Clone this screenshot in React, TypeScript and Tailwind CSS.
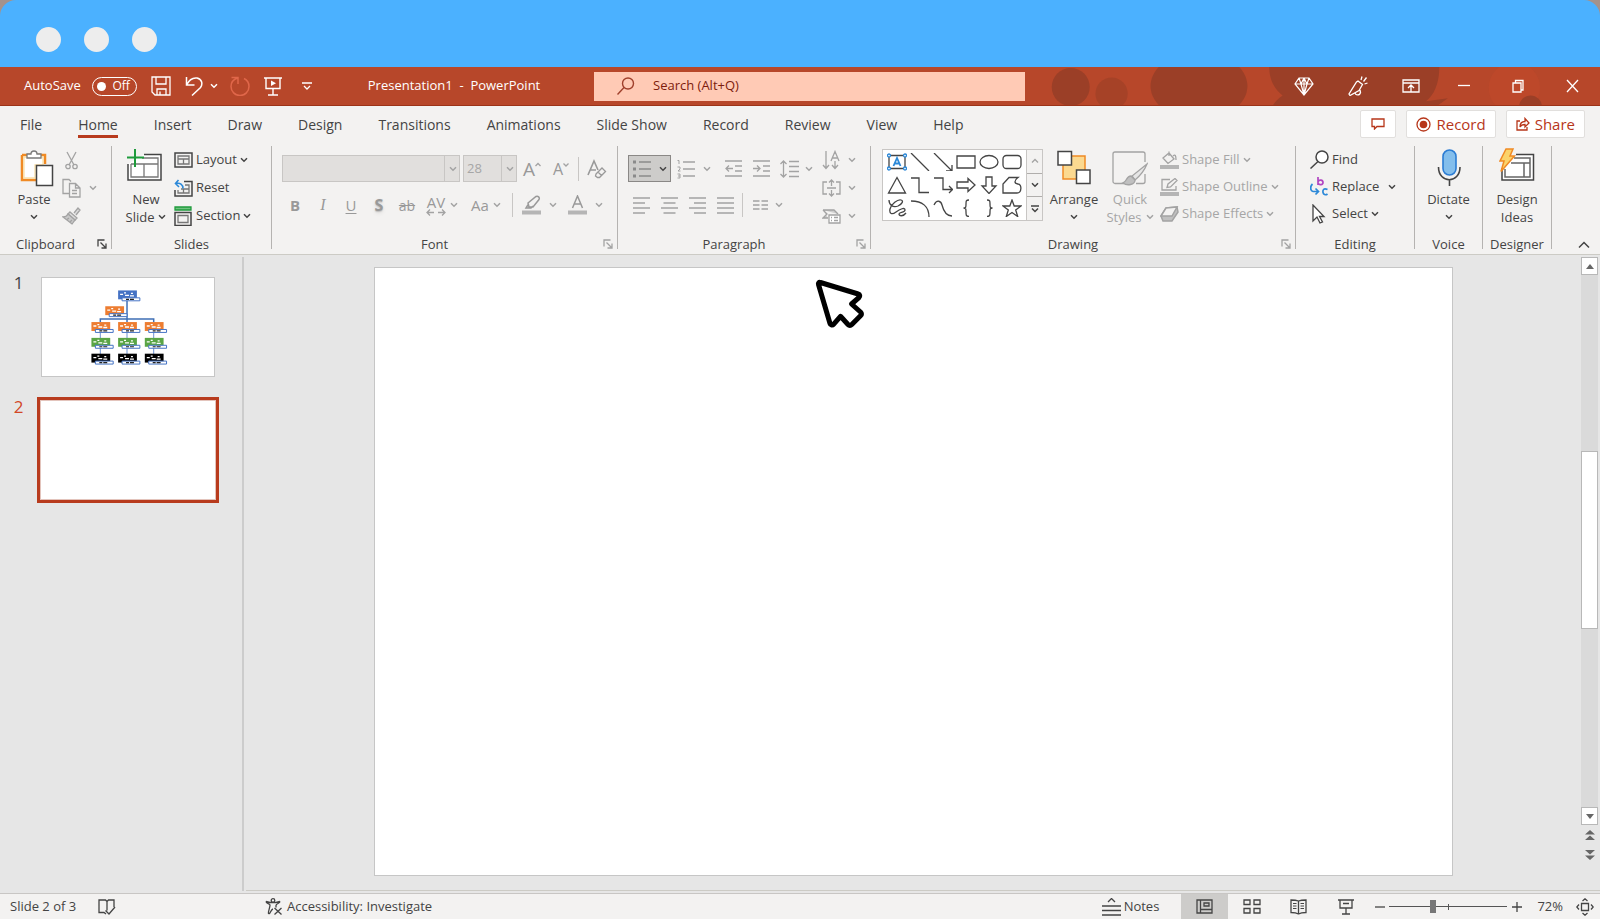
// src/App.tsx
import type { ReactNode } from 'react';
import clsx from 'clsx';

const INK = '#444444';
const MUTED = '#a3a3a3';

type IconProps = { w: number; h: number; color?: string; sw?: number; className?: string; children: ReactNode };

function Icon({ w, h, color = INK, sw = 1.3, className, children }: IconProps) {
  return (
    <svg
      width={w}
      height={h}
      viewBox={`0 0 ${w} ${h}`}
      fill="none"
      stroke={color}
      strokeWidth={sw}
      className={clsx('shrink-0', className)}
      aria-hidden="true"
    >
      {children}
    </svg>
  );
}

function Chevron({ color = INK }: { color?: string }) {
  return (
    <Icon w={8} h={6} color={color} sw={1.5}>
      <path d="M1 1.2l3 3 3-3" />
    </Icon>
  );
}

/* ---------- window + title bar ---------- */

function WindowBar() {
  return (
    <div className="bg-[#a3928c]">
      <div className="flex h-[67px] items-center gap-[23px] rounded-t-2xl bg-[#4bb1ff] pt-3 pl-9">
        <span className="size-[25px] rounded-full bg-[#ededed]" />
        <span className="size-[25px] rounded-full bg-[#ededed]" />
        <span className="size-[25px] rounded-full bg-[#ededed]" />
      </div>
    </div>
  );
}

function TitleBackdrop() {
  return (
    <svg className="absolute top-0 right-0 h-full" width="575" height="40" viewBox="0 0 575 40" aria-hidden="true">
      <g fill="#9b3f27">
        <circle cx="33" cy="21" r="20" />
        <circle cx="76" cy="28" r="17" opacity="0.6" />
        <ellipse cx="168" cy="20" rx="51" ry="36" />
        <path d="M242 0h179c0 18-6 30-14 36l23-3-10 7H246c4-6 10-10 10-10-10-8-14-18-14-30z" />
      </g>
      <circle cx="500" cy="22" r="27" fill="#c24a2b" opacity="0.6" />
      <circle cx="517" cy="42" r="12" fill="#9b3f27" />
    </svg>
  );
}

function TitleBar() {
  return (
    <header className="relative flex h-[39px] items-center border-b border-[#9c3318] bg-[#b7472a] text-white">
      <TitleBackdrop />
      <div className="relative flex w-[594px] shrink-0 items-center pl-6">
        <label className="flex items-center gap-[11px] text-[13px]">
          AutoSave
          <span className="relative flex h-[19px] w-[45px] items-center justify-end pr-[7px]">
            <input
              type="checkbox"
              role="switch"
              className="absolute inset-0 appearance-none rounded-full border-[1.5px] border-white"
            />
            <span className="absolute left-[5px] size-[9px] rounded-full bg-white" />
            <span className="text-[12px]">Off</span>
          </span>
        </label>
        <button type="button" aria-label="Save" className="ml-[14px]">
          <Icon w={20} h={20} color="#fff">
            <path d="M1 1h18v18H4l-3-3zM5 1v7h10V1M6 19v-6h9v6M9 15.500v3.500" />
          </Icon>
        </button>
        <button type="button" aria-label="Undo" className="ml-[14px]">
          <Icon w={18} h={20} color="#fff" sw={1.5}>
            <path d="M1.500 1v8h8M1.500 9C4 4 8 1.500 12 2c5 1 6 6 3.500 9.500L7 19.500" />
          </Icon>
        </button>
        <button type="button" aria-label="Undo history" className="ml-[7px]">
          <Chevron color="#fff" />
        </button>
        <button type="button" aria-label="Redo" className="ml-3">
          <Icon w={20} h={20} color="#e0674a" sw={1.5}>
            <path d="M1.500 1.500H8v6.500M7.500 2C3 3.500 1 7 1 10.500a9 9 0 0 0 18 0C19 7 17 4 14 2.500" />
          </Icon>
        </button>
        <button type="button" aria-label="Start from beginning" className="ml-[14px]">
          <Icon w={18} h={19} color="#fff" sw={1.4}>
            <path d="M0 1h18M2 1v10.500h14V1M9 12v6M4 18h10" />
            <path d="M7 3.500l5 2.800-5 2.800z" fill="#fff" stroke="none" />
          </Icon>
        </button>
        <button type="button" aria-label="Customize toolbar" className="ml-5">
          <Icon w={10} h={8} color="#fff">
            <path d="M0 1h10M2 4l3 3 3-3" />
          </Icon>
        </button>
        <h1 className="ml-14 text-[13px] whitespace-pre">Presentation1&nbsp; -&nbsp; PowerPoint</h1>
      </div>

      <label className="relative flex h-[29px] flex-1 items-center gap-[18px] bg-[#ffcab5] pl-[23px]">
        <Icon w={18} h={18} color="#a0402c" sw={1.4}>
          <circle cx="11" cy="6.500" r="5.500" />
          <path d="M7 10.500L.5 17.500" />
        </Icon>
        <input
          type="search"
          aria-label="Search"
          placeholder="Search (Alt+Q)"
          className="w-full bg-transparent text-[13px] outline-none placeholder:text-[#7d1c0d]"
        />
      </label>

      <div className="relative flex w-[575px] shrink-0 items-center justify-end pr-[21px]">
        <button type="button" aria-label="Premium">
          <Icon w={20} h={19} color="#fff" sw={1.2}>
            <path d="M5 1h10l4 6-9 11L1 7zM1 7h18M5 1l2 6 3 11M15 1l-2 6-3 11M10 1L7 7M10 1l3 6M10 1v17" />
          </Icon>
        </button>
        <button type="button" aria-label="What's new" className="ml-[34px]">
          <Icon w={20} h={20} color="#fff" sw={1.3}>
            <path d="M10 5l4.500 3.500-3.500 6-9 5L1 18l7.500-12zM7 16.500c.5 3 4.500 3.500 5.500 0l-.5-2.500M13 4l1-3.500M15.500 5.500l3-4M16.500 8l3-1" />
          </Icon>
        </button>
        <button type="button" aria-label="Ribbon display options" className="ml-[34px]">
          <Icon w={18} h={14} color="#fff">
            <path d="M1 1h16v12H1zM1 4h16M9 13V6.500M6 9l3-3 3 3" />
          </Icon>
        </button>
        <button type="button" aria-label="Minimize" className="ml-[38px]">
          <Icon w={12} h={14} color="#fff">
            <path d="M0 6.500h12" />
          </Icon>
        </button>
        <button type="button" aria-label="Restore" className="ml-[42px]">
          <Icon w={12} h={14} color="#fff">
            <path d="M1 4h8v9H1zM3.500 4V1.500h7.500V11H9" />
          </Icon>
        </button>
        <button type="button" aria-label="Close" className="ml-[42px]">
          <Icon w={13} h={14} color="#fff">
            <path d="M1 1l11 12M12 1L1 13" />
          </Icon>
        </button>
      </div>
    </header>
  );
}

/* ---------- tabs ---------- */

const TABS = [
  'File', 'Home', 'Insert', 'Draw', 'Design', 'Transitions',
  'Animations', 'Slide Show', 'Record', 'Review', 'View', 'Help',
];

function TabBar() {
  return (
    <nav className="flex h-9 items-center justify-between bg-[#f3f2f1] pr-[15px] pl-5">
      <div className="flex gap-9 pt-1 text-[14px] text-[#444]">
        {TABS.map((tab) => (
          <button
            key={tab}
            type="button"
            className={clsx(
              'h-6 border-b-3 leading-5',
              tab === 'Home' ? 'border-[#b83b1d]' : 'border-transparent',
            )}
          >
            {tab}
          </button>
        ))}
      </div>
      <div className="flex gap-[10px] text-[15px] text-[#b7361a]">
        <button
          type="button"
          aria-label="Comments"
          className="flex h-7 w-9 items-center justify-center rounded-xs border border-[#e1dfdd] bg-white"
        >
          <Icon w={14} h={12} color="#b7361a">
            <path d="M1 1h12v7.500H6L3.500 11V8.500H1z" />
          </Icon>
        </button>
        <button
          type="button"
          className="flex h-7 items-center gap-[5px] rounded-xs border border-[#e1dfdd] bg-white px-[9px]"
        >
          <Icon w={15} h={15} color="#b7361a">
            <circle cx="7.500" cy="7.500" r="6.500" />
            <circle cx="7.500" cy="7.500" r="3.800" fill="#b7361a" stroke="none" />
          </Icon>
          Record
        </button>
        <button
          type="button"
          className="flex h-7 items-center gap-[5px] rounded-xs border border-[#e1dfdd] bg-white px-[9px]"
        >
          <Icon w={14} h={14} color="#b7361a">
            <path d="M4 4H1v9h10v-3M4 10c0-4 2-5.500 5-5.500V1.500L13 6 9 10V7.500C7 7.500 5 8 4 10z" />
          </Icon>
          Share
        </button>
      </div>
    </nav>
  );
}

/* ---------- ribbon building blocks ---------- */

type GroupProps = { label: string; launcher?: 'on' | 'off'; className?: string; children: ReactNode };

function Group({ label, launcher, className, children }: GroupProps) {
  return (
    <section className={clsx('flex shrink-0 flex-col justify-between border-r border-[#b5b3b1]', className)}>
      <div className="flex">{children}</div>
      <div className="flex h-[10px] items-center">
        <h2 className="flex-1 text-center leading-[10px]">{label}</h2>
        {launcher && (
          <button type="button" aria-label={`${label} settings`} className="w-5 pl-[6px]">
            <Icon w={10} h={10} color={launcher === 'on' ? INK : MUTED}>
              <path d="M1 7.500V1h6.500M3.500 3.500l5 5M9 4.500V9H4.500" />
            </Icon>
          </button>
        )}
      </div>
    </section>
  );
}

type BigButtonProps = {
  icon: ReactNode;
  line1: string;
  line2?: string;
  chevron?: boolean;
  muted?: boolean;
  className?: string;
};

function BigButton({ icon, line1, line2, chevron = true, muted, className }: BigButtonProps) {
  return (
    <button
      type="button"
      className={clsx('flex shrink-0 flex-col items-center leading-[18px]', muted && 'text-[#a6a6a6]', className)}
    >
      {icon}
      <span>{line1}</span>
      <span className="flex h-[18px] items-center gap-1 whitespace-nowrap">
        {line2}
        {chevron && <Chevron color={muted ? MUTED : INK} />}
      </span>
    </button>
  );
}

type RowButtonProps = {
  icon: ReactNode;
  label: string;
  chevron?: boolean;
  muted?: boolean;
  className?: string;
};

function RowButton({ icon, label, chevron, muted, className }: RowButtonProps) {
  return (
    <button
      type="button"
      className={clsx('flex items-center gap-[3px] whitespace-nowrap', muted && 'text-[#a6a6a6]', className)}
    >
      {icon}
      <span>{label}</span>
      {chevron && <Chevron color={muted ? MUTED : INK} />}
    </button>
  );
}

type ToolProps = { label: string; chevron?: boolean; className?: string; children: ReactNode };

function Tool({ label, chevron, className, children }: ToolProps) {
  return (
    <button type="button" aria-label={label} className={clsx('flex items-center justify-center', className)}>
      {children}
      {chevron && <Chevron color={MUTED} />}
    </button>
  );
}

function Divider() {
  return <span className="mx-[3px] h-6 w-px bg-[#c8c6c4]" />;
}

/* ---------- ribbon groups ---------- */

function ClipboardGroup() {
  return (
    <Group label="Clipboard" launcher="on" className="w-28">
      <BigButton
        className="ml-[14px] w-10"
        line1="Paste"
        icon={
          <Icon w={40} h={44}>
            <path d="M8 9v25h16M31 18V9H8" stroke="#f08a24" strokeWidth="2.500" />
            <path d="M10 11h19v8h-8v13H10z" fill="#fff" stroke="#fbe0a8" />
            <path d="M13 12V8h4c0-4 6-4 6 0h4v4z" fill="#fff" stroke="#7a7a7a" />
            <path d="M22.500 19.500h16v20h-16z" fill="#fff" strokeWidth="1.500" />
          </Icon>
        }
      />
      <div className="ml-2 flex flex-col">
        <button type="button" aria-label="Cut" className="flex h-7 items-center pl-[3px]">
          <Icon w={13} h={19} color={MUTED}>
            <path d="M2 1l7 13M11 1L4 14" />
            <circle cx="3" cy="15.500" r="2.200" />
            <circle cx="10" cy="15.500" r="2.200" />
          </Icon>
        </button>
        <button type="button" aria-label="Copy" className="flex h-7 items-center gap-2">
          <Icon w={19} h={20} color={MUTED}>
            <path d="M7 15.500H1V1.500h6l2 2M7.500 5.500h6l4.500 4.500v9H7.500zM13.500 5.500V10H18M10 12.500h5M10 15.500h5" />
          </Icon>
          <Chevron color={MUTED} />
        </button>
        <button type="button" aria-label="Format painter" className="flex h-7 items-center">
          <Icon w={19} h={18} color={MUTED}>
            <path d="M12 6l4-5 2 2-4 5M8 5l7 6-2 2-7-6z" fill="#dcdcdc" />
            <path d="M6 7c-1 2-3 3-5 3l9 7c1-1 2-3 3-4z" fill="#c9c9c9" />
            <path d="M5 12.500l2-1.500M8 15l2-2" />
          </Icon>
        </button>
      </div>
    </Group>
  );
}

function SlidesGroup() {
  return (
    <Group label="Slides" className="w-[160px]">
      <BigButton
        className="ml-3 w-11"
        line1="New"
        line2="Slide"
        icon={
          <Icon w={44} h={44}>
            <g transform="translate(3 0)">
              <path d="M17 8.500h17v25.500H1V18" fill="#fff" strokeWidth="1.500" />
              <path d="M15 12h16v19H4V18M4 18h27M17 18v13" stroke="#777" />
              <path d="M8 3v18M0 11.500h17" stroke="#1f9b3c" strokeWidth="2" />
            </g>
          </Icon>
        }
      />
      <div className="ml-[6px] flex flex-col">
        <RowButton
          className="h-7"
          label="Layout"
          chevron
          icon={
            <Icon w={19} h={16}>
              <path d="M1 1h17v14H1z" strokeWidth="1.500" />
              <path d="M4 4h11v8H4zM4 7h11M9.500 7v5" stroke="#777" />
            </Icon>
          }
        />
        <RowButton
          className="h-7"
          label="Reset"
          icon={
            <Icon w={19} h={18}>
              <path d="M10 2.500h8V17H1v-6" strokeWidth="1.500" />
              <path d="M11 6h4v8H4v-3M7 10h8M9.500 10v4" stroke="#777" />
              <path d="M4.500 1L1.500 4.500 5 8M2 4.500c4-1 7 1 7 5" stroke="#2b88d8" strokeWidth="1.600" />
            </Icon>
          }
        />
        <RowButton
          className="h-7"
          label="Section"
          chevron
          icon={
            <Icon w={19} h={20}>
              <path d="M1 1h16v3H1z" fill="#6fc27f" stroke="#1f9b3c" />
              <path d="M1 6.500h16v13H1z" strokeWidth="1.500" />
              <path d="M4 9.500h10v7H4z" stroke="#777" />
            </Icon>
          }
        />
      </div>
    </Group>
  );
}

function FontGroup() {
  return (
    <Group label="Font" launcher="off" className="w-[346px]">
      <div className="flex flex-col gap-2 pt-[9px] pl-[10px] text-[#999]">
        <div className="flex items-center">
          <div className="relative">
            <select
              disabled
              aria-label="Font name"
              className="block h-[27px] w-[178px] appearance-none border border-[#c8c6c4] bg-[#e1dfdd]"
            >
              <option />
            </select>
            <span className="pointer-events-none absolute inset-y-0 right-0 flex w-4 items-center justify-center border-l border-[#c8c6c4]">
              <Chevron color={MUTED} />
            </span>
          </div>
          <div className="relative ml-[3px]">
            <select
              disabled
              aria-label="Font size"
              className="block h-[27px] w-[54px] appearance-none border border-[#c8c6c4] bg-[#e1dfdd] pl-[3px] text-[#a6a6a6] opacity-100"
            >
              <option>28</option>
            </select>
            <span className="pointer-events-none absolute inset-y-0 right-0 flex w-4 items-center justify-center border-l border-[#c8c6c4]">
              <Chevron color={MUTED} />
            </span>
          </div>
          <Tool label="Increase font size" className="w-[30px] text-[19px] leading-6">
            A
            <Icon w={6} h={14} color={MUTED}>
              <path d="M.5 4L3 1.500 5.500 4" />
            </Icon>
          </Tool>
          <Tool label="Decrease font size" className="w-7 text-[16px] leading-6">
            A
            <Icon w={6} h={14} color={MUTED}>
              <path d="M.5 1.500L3 4l2.500-2.500" />
            </Icon>
          </Tool>
          <Divider />
          <Tool label="Clear formatting" className="w-[30px]">
            <Icon w={20} h={20} color="#999">
              <path d="M1 16L7 2l4 9M3 11h6" strokeWidth="1.600" />
              <path d="M9 15l6-6 3.500 3.500-6 6h-2L8.500 17zM11 13l3.500 3.500" />
            </Icon>
          </Tool>
        </div>
        <div className="-ml-px flex h-[30px] items-center">
          <Tool label="Bold" className="w-7 text-[15px] font-bold">B</Tool>
          <Tool label="Italic" className="w-7 font-['Liberation_Serif',serif] text-[16px] italic">I</Tool>
          <Tool label="Underline" className="w-7 text-[15px] underline underline-offset-2">U</Tool>
          <Tool label="Shadow" className="w-7 text-[16px] font-bold text-shadow-md">S</Tool>
          <Tool label="Strikethrough" className="w-7 text-[14px] line-through">ab</Tool>
          <Tool label="Character spacing" chevron className="w-[42px] gap-1">
            <span className="flex flex-col items-center text-[15px] leading-[14px]">
              AV
              <Icon w={20} h={7} color={MUTED}>
                <path d="M4 .5L1 3.500l3 3M1 3.500h7M16 .5l3 3-3 3M19 3.500h-7" />
              </Icon>
            </span>
          </Tool>
          <Tool label="Change case" chevron className="w-[46px] gap-1 text-[15px]">Aa</Tool>
          <Divider />
          <Tool label="Text highlight" chevron className="w-[46px] gap-2">
            <Icon w={19} h={20} color="#999">
              <path d="M6 8l8-6.500c2-1 4 1 3 3L11 12H7zM6.500 9L4 13h5l2-2" strokeWidth="1.500" />
              <path d="M0 15.500h19v4H0z" fill="#b5b5b5" stroke="none" />
            </Icon>
          </Tool>
          <Tool label="Font color" chevron className="w-[46px] gap-2">
            <Icon w={19} h={20} color="#999">
              <path d="M4.500 13L9.500 1l5 12M6 9h7" strokeWidth="1.500" />
              <path d="M0 15.500h19v4H0z" fill="#b5b5b5" stroke="none" />
            </Icon>
          </Tool>
        </div>
      </div>
    </Group>
  );
}

const ALIGN_PATHS = [
  { label: 'Align left', d: 'M0 1h17M0 6h12M0 11h17M0 16h12' },
  { label: 'Center', d: 'M0 1h17M2.500 6h12M0 11h17M2.500 16h12' },
  { label: 'Align right', d: 'M0 1h17M5 6h12M0 11h17M5 16h12' },
  { label: 'Justify', d: 'M0 1h17M0 6h17M0 11h17M0 16h17' },
];

function ParagraphGroup() {
  return (
    <Group label="Paragraph" launcher="off" className="w-[253px]">
      <div className="flex w-[204px] flex-col gap-2 pt-[9px] pl-[10px]">
        <div className="flex h-[27px] items-center">
          <button
            type="button"
            aria-label="Bullets"
            className="flex h-full w-[43px] items-center justify-center gap-2 border border-[#8a8886] bg-[#cdccca]"
          >
            <Icon w={18} h={18} color="#8a8a8a">
              <path d="M6 2h12M6 9h12M6 16h12" />
              <path d="M0 .5h3v3H0zM0 7.500h3v3H0zM0 14.500h3v3H0z" fill="#8a8a8a" stroke="none" />
            </Icon>
            <Chevron />
          </button>
          <Tool label="Numbering" chevron className="w-[46px] gap-2">
            <Icon w={18} h={20} color={MUTED}>
              <path d="M6 3h12M6 10h12M6 17h12" />
              <path d="M.5 1.500H2V5M.5 8H3v2L1 12h2.500M.5 15H3v4H.5M1 17h2" strokeWidth="1" />
            </Icon>
          </Tool>
          <Tool label="Decrease indent" className="ml-[2px] w-7">
            <Icon w={17} h={17} color={MUTED}>
              <path d="M0 1h17M10 6h7M10 11h7M0 16h17M8 8.500H1M4 5.500l-3 3 3 3" />
            </Icon>
          </Tool>
          <Tool label="Increase indent" className="w-7">
            <Icon w={17} h={17} color={MUTED}>
              <path d="M0 1h17M10 6h7M10 11h7M0 16h17M0 8.500h7M4 5.500l3 3-3 3" />
            </Icon>
          </Tool>
          <Tool label="Line spacing" chevron className="w-[42px] gap-[6px]">
            <Icon w={19} h={18} color={MUTED}>
              <path d="M9 1.500h10M9 6.500h10M9 11.500h10M9 16.500h10M3.500 1v16M.5 4l3-3 3 3M.5 14l3 3 3-3" />
            </Icon>
          </Tool>
        </div>
        <div className="-ml-px flex h-[30px] items-center">
          {ALIGN_PATHS.map((a) => (
            <Tool key={a.label} label={a.label} className="w-7">
              <Icon w={17} h={17} color={MUTED}>
                <path d={a.d} />
              </Icon>
            </Tool>
          ))}
          <Divider />
          <Tool label="Columns" chevron className="w-11 gap-[7px]">
            <Icon w={15} h={10} color={MUTED}>
              <path d="M0 1h6.500M8.500 1H15M0 5h6.500M8.500 5H15M0 9h6.500M8.500 9H15" />
            </Icon>
          </Tool>
        </div>
      </div>
      <div className="flex flex-col">
        <Tool label="Text direction" chevron className="h-7 gap-[7px]">
          <Icon w={19} h={20} color={MUTED}>
            <path d="M4 1v17M1 15l3 3.500L7 15M13 11v7M10 15l3 3.500 3-3.500M9 11l4-9.500L17 11M10.500 8h5" />
          </Icon>
        </Tool>
        <Tool label="Align text" chevron className="h-7 gap-[7px]">
          <Icon w={19} h={18} color={MUTED}>
            <path d="M5 3H1v12h4M14 3h4v12h-4M5 9h9M9.500 7V1M7 3.500L9.500 1 12 3.500M9.500 11v6M7 14.500L9.500 17l2.500-2.500" />
          </Icon>
        </Tool>
        <Tool label="Convert to SmartArt" chevron className="h-7 gap-[7px]">
          <Icon w={19} h={15} color={MUTED}>
            <path d="M1 1h11l4 4M1 1l4 4-4 4h5" fill="#cfcfcf" />
            <path d="M7 6h11v8H7z" fill="#fff" />
            <path d="M9 8.500h1M12 8.500h4M9 11.500h1M12 11.500h4" />
          </Icon>
        </Tool>
      </div>
    </Group>
  );
}

const SHAPES: { label: string; body: ReactNode }[] = [
  {
    label: 'Text box',
    body: (
      <>
        <path d="M2 2.500h16v13H2z" />
        <path d="M6.500 13L10 5l3.500 8M8 10.500h4" stroke="#2b88d8" strokeWidth="1.800" />
        <g fill="#fff" stroke="#2b88d8">
          <circle cx="2" cy="2.500" r="1.500" />
          <circle cx="18" cy="2.500" r="1.500" />
          <circle cx="2" cy="15.500" r="1.500" />
          <circle cx="18" cy="15.500" r="1.500" />
        </g>
      </>
    ),
  },
  { label: 'Line', body: <path d="M1 0l18 18" /> },
  { label: 'Arrow', body: <path d="M1 0l18 18M19 12v6h-6" /> },
  { label: 'Rectangle', body: <path d="M1 3h18v12H1z" /> },
  { label: 'Oval', body: <ellipse cx="10" cy="9" rx="9" ry="6.500" /> },
  { label: 'Rounded rectangle', body: <rect x="1" y="2.500" width="18" height="13" rx="3.500" /> },
  { label: 'Triangle', body: <path d="M10 1.500L18.500 17h-17z" /> },
  { label: 'Elbow connector', body: <path d="M1 2h8v14.500h10" /> },
  { label: 'Elbow arrow connector', body: <path d="M1 2h9v11.500h9M16 10l3.500 3.500L16 17" /> },
  { label: 'Right arrow', body: <path d="M1 6h11V2.500L19 9l-7 6.500V12H1z" /> },
  { label: 'Down arrow', body: <path d="M7 1h6v9h4l-7 7.500L3 10h4z" /> },
  { label: 'Freeform', body: <path d="M1 17V8l6-6.500h9c-4 3-4 6 0 6.500 4 0 4 9-1 9z" /> },
  {
    label: 'Scribble',
    body: <path d="M2 1c0 5 4 8 9 6 4-2 6-5 3-6S4 5 3 10s2 6 6 3 9-5 9-2-6 2-6 4 4 3 7-1" />,
  },
  { label: 'Arc', body: <path d="M1 2c11 0 18 5 18 16" /> },
  { label: 'Curve', body: <path d="M1 6c3-6 7-4 8 0s3 11 10 11" /> },
  { label: 'Left brace', body: <path d="M13 1c-3 0-3 1-3 4s0 4-2.500 4c2.500 0 2.500 1 2.500 4s0 4.500 3 4.500" /> },
  { label: 'Right brace', body: <path d="M8 1c3 0 3 1 3 4s0 4 2.500 4C11 9 11 10 11 13s0 4.500-3 4.500" /> },
  { label: 'Star', body: <path d="M10 1l2.200 6H19l-5.300 4 2 6.500L10 13.500l-5.700 4 2-6.500L1 7h6.800z" /> },
];

function DrawingGroup() {
  return (
    <Group label="Drawing" launcher="off" className="w-[425px]">
      <div className="mt-[3px] ml-[11px] flex h-[72px] border border-[#c8c6c4] bg-white">
        <div className="grid w-[143px] grid-cols-6 grid-rows-3 px-[2px]">
          {SHAPES.map((shape) => (
            <button
              key={shape.label}
              type="button"
              aria-label={shape.label}
              className="flex items-center justify-center"
            >
              <Icon w={20} h={18}>{shape.body}</Icon>
            </button>
          ))}
        </div>
        <div className="flex w-4 flex-col border-l border-[#c8c6c4] bg-[#f3f2f1]">
          <button type="button" aria-label="Scroll up" className="flex flex-1 items-center justify-center">
            <Icon w={8} h={6} color={MUTED}>
              <path d="M1 4.500l3-3 3 3" />
            </Icon>
          </button>
          <button
            type="button"
            aria-label="Scroll down"
            className="flex flex-1 items-center justify-center border-y border-[#b0aeac]"
          >
            <Chevron />
          </button>
          <button type="button" aria-label="More shapes" className="flex flex-1 items-center justify-center">
            <Icon w={10} h={8} sw={1.5}>
              <path d="M1 1h8M2 3.500l3 3 3-3" />
            </Icon>
          </button>
        </div>
      </div>
      <BigButton
        className="ml-1 w-[54px]"
        line1="Arrange"
        icon={
          <Icon w={36} h={44}>
            <path d="M7 10h22v23H7z" fill="#fbd990" stroke="#f08a24" strokeWidth="1.500" />
            <path d="M2 5.500h13.500V19H2zM20.500 24H34v13.500H20.500z" fill="#fff" strokeWidth="1.500" />
          </Icon>
        }
      />
      <BigButton
        className="ml-[2px] w-[54px]"
        line1="Quick"
        line2="Styles"
        muted
        icon={
          <Icon w={36} h={44} color={MUTED}>
            <path d="M12 37.500H3c-1 0-2-1-2-2V8c0-1 1-2 2-2h28c1 0 2 1 2 2v8M33 28v7.500c0 1-1 2-2 2h-7" />
            <path d="M35 18L20 30l3 4c6-5 10-11 12-16z" fill="#e6e6e6" />
            <path d="M19 30c-5 0-4 6-8 7 4 3 12 2 12-3z" fill="#c0c0c0" />
          </Icon>
        }
      />
      <div className="ml-[3px] flex flex-col">
        <RowButton
          className="h-[27px]"
          label="Shape Fill"
          chevron
          muted
          icon={
            <Icon w={19} h={18} color={MUTED}>
              <path d="M3 7l6-5 5 6-6 4.500zM9 5V.5M13 5c2-2 3-1 3 4" />
              <path d="M0 14h19v4H0z" fill="#b5b5b5" stroke="none" />
            </Icon>
          }
        />
        <RowButton
          className="h-[27px]"
          label="Shape Outline"
          chevron
          muted
          icon={
            <Icon w={19} h={18} color={MUTED}>
              <path d="M10 1.500H2V12h14V8M7 9.500L8 6l7-5.500 2 2L10.500 9z" />
              <path d="M0 14h19v4H0z" fill="#b5b5b5" stroke="none" />
            </Icon>
          }
        />
        <RowButton
          className="h-[27px]"
          label="Shape Effects"
          chevron
          muted
          icon={
            <Icon w={19} h={16} color={MUTED} sw={1.5}>
              <path d="M1 10l5-8 11-1 1 5-6 9H3z" fill="#c0c0c0" />
              <path d="M1 10l5-8 11-1-5 9z" fill="#f3f2f1" />
            </Icon>
          }
        />
      </div>
    </Group>
  );
}

function EditingGroup() {
  return (
    <Group label="Editing" className="w-[119px]">
      <div className="ml-[14px] flex flex-1 flex-col pr-[18px]">
        <RowButton
          className="h-[27px]"
          label="Find"
          icon={
            <Icon w={19} h={19} sw={1.5}>
              <circle cx="12" cy="7" r="6" fill="#fff" />
              <path d="M8 11.500L.5 18.500" />
            </Icon>
          }
        />
        <button type="button" className="flex h-[27px] items-center gap-[3px]">
          <Icon w={19} h={20} sw={1.7}>
            <path d="M8 0v8M8 5c1-3 5-2 5 .5S9 8.500 8 6" stroke="#b146c2" />
            <path d="M2.500 7C0 9 0 14 3 14.500h5M5.500 11.500l3 3-3 3" stroke="#2b88d8" />
            <path d="M17.500 12.500c-4-2-5 1-4.500 3s2.500 3 4.500 1.500" stroke="#2b88d8" />
          </Icon>
          Replace
          <span className="ml-auto">
            <Chevron />
          </span>
        </button>
        <RowButton
          className="h-[27px]"
          label="Select"
          chevron
          icon={
            <Icon w={19} h={20}>
              <path d="M3 1v16l4-4 3 6 2.500-1-3-5.500H14z" fill="#fff" />
            </Icon>
          }
        />
      </div>
    </Group>
  );
}

function Ribbon() {
  return (
    <div className="flex h-[113px] border-b border-[#cccbc5] bg-[#f3f2f1] pt-1 pb-[5px] text-[13px] text-[#444]">
      <ClipboardGroup />
      <SlidesGroup />
      <FontGroup />
      <ParagraphGroup />
      <DrawingGroup />
      <EditingGroup />
      <Group label="Voice" className="w-[68px]">
        <BigButton
          className="w-full"
          line1="Dictate"
          icon={
            <Icon w={24} h={44} sw={1.6}>
              <rect x="6" y="4" width="13" height="25" rx="6.500" fill="#83beec" stroke="#2b7cd3" />
              <path d="M1.500 21c0 17 21.500 17 21.500 0M12.500 33.500V40" />
            </Icon>
          }
        />
      </Group>
      <Group label="Designer" className="w-[69px]">
        <BigButton
          className="w-full"
          line1="Design"
          line2="Ideas"
          chevron={false}
          icon={
            <Icon w={36} h={44} sw={1.5}>
              <path d="M17 8.500h17.500V34H3V22" fill="#fff" />
              <path d="M15 12h16v19H6v-8M12 17h19M25 17v14" stroke="#666" />
              <path d="M7 3h7l-3 7h4.500L2 25.500l3-10.500H1z" fill="#fbd36b" stroke="#f08a24" />
            </Icon>
          }
        />
      </Group>
      <button type="button" aria-label="Collapse ribbon" className="mr-[10px] ml-auto self-end">
        <Icon w={12} h={8} sw={1.5}>
          <path d="M1 6.500l5-5 5 5" />
        </Icon>
      </button>
    </div>
  );
}

/* ---------- slide panel ---------- */

const CHART_NODES = [
  { x: 77, y: 12, fill: '#4472c4' },
  { x: 64, y: 28, fill: '#ed7d31' },
  { x: 50, y: 44, fill: '#ed7d31' },
  { x: 77, y: 44, fill: '#ed7d31' },
  { x: 104, y: 44, fill: '#ed7d31' },
  { x: 50, y: 60, fill: '#5aa545' },
  { x: 77, y: 60, fill: '#5aa545' },
  { x: 104, y: 60, fill: '#5aa545' },
  { x: 50, y: 76, fill: '#000000' },
  { x: 77, y: 76, fill: '#000000' },
  { x: 104, y: 76, fill: '#000000' },
];

function OrgChart() {
  return (
    <svg viewBox="0 0 174 98" className="h-full w-full" aria-hidden="true">
      <path d="M86 20v24M59 44v-3h54v3" fill="none" stroke="#3f6fb5" strokeWidth="1.500" />
      <path d="M59 52v26M86 52v26M113 52v26" stroke="#6d93d1" />
      {CHART_NODES.map((n) => (
        <g key={`${n.x}-${n.y}`} transform={`translate(${n.x} ${n.y})`}>
          <path d="M0 0h19v9H0z" fill={n.fill} />
          <path d="M2 4h3M6 2.500h2M7 5h4M13 3h2M12 5.500h4" stroke="#fff" strokeWidth="1.300" />
          <path d="M4 7.500h18v3H4z" fill="#fff" stroke="#4472c4" />
          <path d="M8 9h3M12 9h4" stroke="#222" strokeWidth="1.200" />
        </g>
      ))}
    </svg>
  );
}

function SlidePanel() {
  return (
    <aside className="mt-[2px] mb-[2px] w-[244px] shrink-0 border-r-2 border-[#cccccc] pt-4 pr-[23px]">
      <ol className="flex flex-col gap-4 text-[17px]">
        <li className="flex">
          <span className="w-[37px] shrink-0 text-center leading-5 text-[#444]">1</span>
          <button type="button" aria-label="Slide 1" className="h-[108px] flex-1 border-4 border-transparent">
            <span className="block h-full border border-[#c6c6c6] bg-white">
              <OrgChart />
            </span>
          </button>
        </li>
        <li className="flex">
          <span className="w-[37px] shrink-0 text-center leading-5 text-[#d24726]">2</span>
          <button
            type="button"
            aria-label="Slide 2"
            aria-current="true"
            className="h-[106px] flex-1 border-3 border-[#b83b1d]"
          >
            <span className="block h-full border border-[#e3c4bc] bg-white" />
          </button>
        </li>
      </ol>
    </aside>
  );
}

function Cursor() {
  return (
    <svg
      className="absolute top-[11px] left-[440px]"
      width="50"
      height="52"
      viewBox="0 0 50 52"
      fill="#fff"
      stroke="#000"
      strokeWidth="5"
      strokeLinejoin="round"
      aria-hidden="true"
    >
      <path d="M5.500 3.500c-1.500-.5-2.500.5-2 2L15 44.500c.5 1.800 2.500 2 3.500.8l7-8 7.500 8.200c1.200 1.300 2.500 1.300 3.800 0l8.700-8.700c1.300-1.300 1.300-2.500 0-3.800L36.500 25l7.500-6.500c1.200-1 1-3-.8-3.500z" />
    </svg>
  );
}

function ScrollBar() {
  return (
    <div className="mt-[2px] mr-[2px] flex w-[17px] shrink-0 flex-col items-stretch">
      <button
        type="button"
        aria-label="Scroll up"
        className="flex h-[18px] items-center justify-center border border-[#b8b8b8] bg-white"
      >
        <Icon w={8} h={5}>
          <path d="M0 5l4-5 4 5z" fill="#666" stroke="none" />
        </Icon>
      </button>
      <div className="flex flex-1 flex-col bg-[#dadada]">
        <div className="grow-177" />
        <div className="grow-176 border border-[#b8b8b8] bg-white" />
        <div className="grow-179" />
      </div>
      <button
        type="button"
        aria-label="Scroll down"
        className="flex h-[18px] items-center justify-center border border-[#b8b8b8] bg-white"
      >
        <Icon w={8} h={5}>
          <path d="M0 0l4 5 4-5z" fill="#666" stroke="none" />
        </Icon>
      </button>
      <button type="button" aria-label="Previous slide" className="flex h-5 items-center justify-center">
        <Icon w={10} h={10}>
          <path d="M0 4.500L5 0l5 4.500zM0 10l5-4.500L10 10z" fill="#666" stroke="none" />
        </Icon>
      </button>
      <button type="button" aria-label="Next slide" className="mb-[25px] flex h-5 items-center justify-center">
        <Icon w={10} h={10}>
          <path d="M0 0l5 4.500L10 0zM0 5.500L5 10l5-4.500z" fill="#666" stroke="none" />
        </Icon>
      </button>
    </div>
  );
}

function Workspace() {
  return (
    <div className="flex min-h-0 flex-1 bg-[#e6e6e6]">
      <SlidePanel />
      <main className="mb-[2px] ml-[2px] flex min-w-0 flex-1 border-b border-[#cccbc5]">
        <div className="flex min-w-0 flex-1 pt-3 pr-32 pb-[14px] pl-32">
          <div className="relative flex-1 border border-[#c6c6c6] bg-white">
            <Cursor />
          </div>
        </div>
        <ScrollBar />
      </main>
    </div>
  );
}

/* ---------- status bar ---------- */

function StatusBar() {
  return (
    <footer className="flex h-[26px] items-center border-t border-[#c8c6c4] bg-[#f3f2f1] pr-[6px] pl-[10px] text-[13px] text-[#444]">
      <div className="flex w-[255px] items-center gap-[22px]">
        <span>Slide 2 of 3</span>
        <button type="button" aria-label="Spelling">
          <Icon w={18} h={16}>
            <path d="M9 2.500v9M9 2.500L7.500 1H1v12.500h5l2 1.500M9 2.500L10.500 1H16v7M7.500 11.500l3.500 3.500 6-7" />
          </Icon>
        </button>
      </div>
      <button type="button" className="flex items-center gap-1">
        <Icon w={18} h={17}>
          <circle cx="8" cy="2.500" r="1.800" />
          <path d="M1 3.500c0 2 4 2 4 3.500 0 3-2 6-1.500 8.500 2 1 2-4 4.500-4.500M15 3.500c0 2-4 2-4 4v2M1 3.500l4 1h6l4-1M9.500 10l7 6.500M16.500 10l-7 6.500" />
        </Icon>
        Accessibility: Investigate
      </button>
      <div className="ml-auto flex h-full items-center">
        <button type="button" className="mr-[22px] flex items-center gap-[3px]">
          <Icon w={19} h={18} className="mt-px">
            <path d="M6 4l3.500-3.500L13 4M0 8h19M0 12.500h19M0 17h19" />
          </Icon>
          Notes
        </button>
        <button
          type="button"
          aria-label="Normal view"
          className="flex h-full w-[47px] items-center justify-center bg-[#cdccca]"
        >
          <Icon w={17} h={15}>
            <path d="M1 1h15v13H1zM4.500 1v13M4.500 10.500H16M8 4h5v3H8z" />
          </Icon>
        </button>
        <button type="button" aria-label="Slide sorter" className="flex h-full w-[47px] items-center justify-center">
          <Icon w={18} h={15}>
            <path d="M1 1h6v4.500H1zM11 1h6v4.500h-6zM1 9.500h6V14H1zM11 9.500h6V14h-6z" />
          </Icon>
        </button>
        <button type="button" aria-label="Reading view" className="flex h-full w-[47px] items-center justify-center">
          <Icon w={17} h={16}>
            <path d="M8.500 2v13M8.500 2C6 1 3 1 1 1v12.500c3 0 5 0 7.500 1.500M8.500 2C11 1 14 1 16 1v12.500c-3 0-5 0-7.500 1.500" />
            <path d="M3 4.500h3.500M3 7h3.500M3 9.500h3.500M10.500 4.500H14M10.500 7H14M10.500 9.500H14" strokeWidth="1" />
          </Icon>
        </button>
        <button type="button" aria-label="Slide show" className="flex h-full w-[47px] items-center justify-center">
          <Icon w={16} h={16}>
            <path d="M0 1h16M2 1v8h12V1M5 4.500h6M8 9v6M4 15h8" />
          </Icon>
        </button>
        <button type="button" aria-label="Zoom out" className="ml-[6px]">
          <Icon w={10} h={10}>
            <path d="M0 5h10" />
          </Icon>
        </button>
        <span className="relative ml-1 flex w-[118px] items-center">
          <span className="absolute left-[59px] h-[6px] w-px bg-[#555]" />
          <input
            type="range"
            aria-label="Zoom"
            min={0}
            max={100}
            defaultValue={36}
            className="relative h-[14px] w-full appearance-none bg-transparent [&::-webkit-slider-runnable-track]:h-px [&::-webkit-slider-runnable-track]:bg-[#555] [&::-webkit-slider-thumb]:mt-[-6px] [&::-webkit-slider-thumb]:h-[13px] [&::-webkit-slider-thumb]:w-[6px] [&::-webkit-slider-thumb]:appearance-none [&::-webkit-slider-thumb]:bg-[#777]"
          />
        </span>
        <button type="button" aria-label="Zoom in" className="ml-[5px]">
          <Icon w={10} h={10}>
            <path d="M0 5h10M5 0v10" />
          </Icon>
        </button>
        <span className="mr-[13px] ml-[15px]">72%</span>
        <button type="button" aria-label="Fit to window">
          <Icon w={18} h={18}>
            <path d="M5.500 5.500h7v7h-7zM6.500 3L9 .8 11.500 3M6.500 15L9 17.200l2.500-2.200M3 6.500L.8 9 3 11.500M15 6.500L17.200 9 15 11.500" />
          </Icon>
        </button>
      </div>
    </footer>
  );
}

export default function App() {
  return (
    <div className="flex h-screen flex-col overflow-hidden font-['Open_Sans','Noto_Sans',sans-serif]">
      <WindowBar />
      <TitleBar />
      <TabBar />
      <Ribbon />
      <Workspace />
      <StatusBar />
    </div>
  );
}
